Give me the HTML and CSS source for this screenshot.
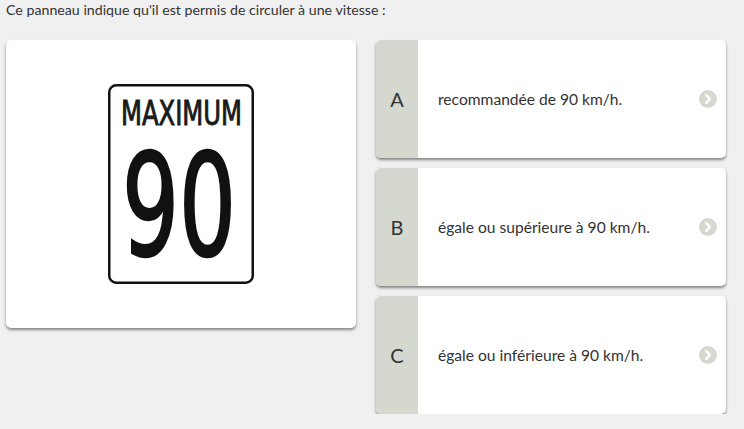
FILE: index.html
```html
<!DOCTYPE html>
<html lang="fr">
<head>
<meta charset="utf-8">
<link rel="stylesheet" href="styles.css">
</head>
<body>
<div class="page">
  <p class="question">Ce panneau indique qu'il est permis de circuler à une vitesse :</p>
  <div class="layout">
    <div class="image-card">
      <svg class="sign" width="150" height="204" viewBox="0 0 150 204">
        <rect x="3.25" y="3.25" width="143.5" height="197.5" rx="7" ry="7" fill="#fff" stroke="#111" stroke-width="2.5"/>
        <text class="sign-top" x="15" y="43" textLength="121" lengthAdjust="spacingAndGlyphs">MAXIMUM</text>
        <text class="sign-num" x="16" y="173" textLength="114" lengthAdjust="spacingAndGlyphs">90</text>
      </svg>
    </div>
    <div class="answers">
      <div class="answer">
        <div class="letter">A</div>
        <div class="label">recommandée de 90 km/h.</div>
        <span class="chev"><svg width="18" height="18" viewBox="0 0 18 18"><path d="M7.2 5.2 L11 9 L7.2 12.8" fill="none" stroke="#fff" stroke-width="2.4" stroke-linecap="round" stroke-linejoin="round"/></svg></span>
      </div>
      <div class="answer">
        <div class="letter">B</div>
        <div class="label">égale ou supérieure à 90 km/h.</div>
        <span class="chev"><svg width="18" height="18" viewBox="0 0 18 18"><path d="M7.2 5.2 L11 9 L7.2 12.8" fill="none" stroke="#fff" stroke-width="2.4" stroke-linecap="round" stroke-linejoin="round"/></svg></span>
      </div>
      <div class="answer">
        <div class="letter">C</div>
        <div class="label">égale ou inférieure à 90 km/h.</div>
        <span class="chev"><svg width="18" height="18" viewBox="0 0 18 18"><path d="M7.2 5.2 L11 9 L7.2 12.8" fill="none" stroke="#fff" stroke-width="2.4" stroke-linecap="round" stroke-linejoin="round"/></svg></span>
      </div>
    </div>
  </div>
</div>
</body>
</html>
```
FILE: styles.css
```css
html, body {
  margin: 0;
  padding: 0;
  background: #f0f0f0;
}
body {
  font-family: Lato, "Open Sans", sans-serif;
  color: #333;
}
.page {
  padding: 0 6px;
}
.question {
  margin: 0;
  height: 40px;
  font-size: 14.2px;
  line-height: 20px;
  color: #333;
}
.layout {
  display: grid;
  grid-template-columns: 350px 350px;
  column-gap: 20px;
  align-items: start;
}
.image-card {
  height: 288px;
  background: #fff;
  border-radius: 5px;
  box-shadow: 0 2px 3px rgba(0, 0, 0, 0.45);
  display: flex;
  align-items: center;
  justify-content: center;
}
.sign {
  display: block;
}
.sign-top {
  font-family: "DejaVu Sans Condensed", "DejaVu Sans", sans-serif;
  font-size: 34px;
  fill: #1a1a1a;
  stroke: #1a1a1a;
  stroke-width: 0.9px;
}
.sign-num {
  font-family: "DejaVu Sans Condensed", "DejaVu Sans", sans-serif;
  font-size: 140px;
  fill: #111;
  stroke: #111;
  stroke-width: 2.4px;
}
.answers {
  display: flex;
  flex-direction: column;
  gap: 10px;
}
.answer {
  height: 118px;
  display: flex;
  align-items: center;
  background: #fff;
  border-radius: 5px;
  overflow: hidden;
  box-shadow: 0 2px 3px rgba(0, 0, 0, 0.45);
}
.letter {
  width: 42px;
  align-self: stretch;
  background: #d5d8cf;
  display: flex;
  align-items: center;
  justify-content: center;
  font-size: 20px;
  color: #333;
}
.label {
  flex: 1;
  padding-left: 20px;
  font-size: 15.6px;
  color: #333;
}
.chev {
  width: 18px;
  height: 18px;
  border-radius: 50%;
  background: #d5d8cf;
  margin-right: 9px;
  display: flex;
}
.chev svg {
  display: block;
}
```
